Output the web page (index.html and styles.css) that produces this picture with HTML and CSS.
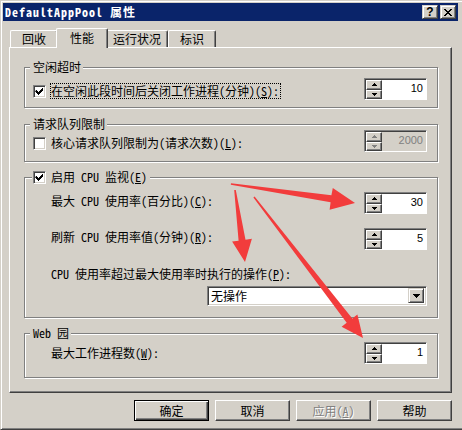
FILE: index.html
```html
<!DOCTYPE html>
<html lang="zh-CN">
<head>
<meta charset="utf-8">
<title>DefaultAppPool 属性</title>
<link rel="stylesheet" href="styles.css">
</head>
<body>
<div class="window">
  <div class="titlebar">
    <span class="title">DefaultAppPool 属性</span>
    <div class="caption">
      <span class="cbtn help">?</span>
      <span class="cbtn close"><svg width="8" height="7" viewBox="0 0 8 7"><path d="M0 0h2v1h-2z M6 0h2v1h-2z M1 1h2v1h-2z M5 1h2v1h-2z M2 2h4v1h-4z M3 3h2v1h-2z M2 4h4v1h-4z M1 5h2v1h-2z M5 5h2v1h-2z M0 6h2v1h-2z M6 6h2v1h-2z"/></svg></span>
    </div>
  </div>

  <div class="tabs">
    <div class="tab">回收</div>
    <div class="tab active">性能</div>
    <div class="tab">运行状况</div>
    <div class="tab">标识</div>
  </div>

  <div class="panel">
    <div class="group g-idle">
      <div class="legend">空闲超时</div>
      <div class="check-row">
        <div class="check-wrap">
          <span class="chk"><svg width="9" height="9" viewBox="0 0 9 9"><path d="M1 3h1v1h1v1h1v-1h1v-1h1v-1h1v-1h1v3h-1v1h-1v1h-1v1h-1v1h-1v-1h-1v-1h-1v-1h-1z"/></svg></span>
          <span class="lbl focus">在空闲此段时间后关闭工作进程(分钟)(<u>S</u>):</span>
        </div>
        <div class="spin">
          <div class="spin-btns">
            <span class="sb"><svg width="5" height="3" viewBox="0 0 5 3"><path d="M2 0h1v1h1v1h1v1h-5v-1h1v-1h1z"/></svg></span>
            <span class="sb"><svg width="5" height="3" viewBox="0 0 5 3"><path d="M0 0h5v1h-1v1h-1v1h-1v-1h-1v-1h-1z"/></svg></span>
          </div>
          <div class="spin-val">10</div>
        </div>
      </div>
    </div>

    <div class="group g-queue">
      <div class="legend">请求队列限制</div>
      <div class="check-row">
        <div class="check-wrap">
          <span class="chk"></span>
          <span class="lbl">核心请求队列限制为(请求次数)(<u>L</u>):</span>
        </div>
        <div class="spin disabled">
          <div class="spin-btns">
            <span class="sb"><svg width="5" height="3" viewBox="0 0 5 3"><path d="M2 0h1v1h1v1h1v1h-5v-1h1v-1h1z"/></svg></span>
            <span class="sb"><svg width="5" height="3" viewBox="0 0 5 3"><path d="M0 0h5v1h-1v1h-1v1h-1v-1h-1v-1h-1z"/></svg></span>
          </div>
          <div class="spin-val">2000</div>
        </div>
      </div>
    </div>

    <div class="group g-cpu">
      <div class="legend check-legend">
        <span class="chk"><svg width="9" height="9" viewBox="0 0 9 9"><path d="M1 3h1v1h1v1h1v-1h1v-1h1v-1h1v-1h1v3h-1v1h-1v1h-1v1h-1v1h-1v-1h-1v-1h-1v-1h-1z"/></svg></span>
        <span class="lbl">启用 CPU 监视(<u>E</u>)</span>
      </div>
      <div class="field-row first">
        <span class="txt">最大 CPU 使用率(百分比)(<u>C</u>):</span>
        <div class="spin">
          <div class="spin-btns">
            <span class="sb"><svg width="5" height="3" viewBox="0 0 5 3"><path d="M2 0h1v1h1v1h1v1h-5v-1h1v-1h1z"/></svg></span>
            <span class="sb"><svg width="5" height="3" viewBox="0 0 5 3"><path d="M0 0h5v1h-1v1h-1v1h-1v-1h-1v-1h-1z"/></svg></span>
          </div>
          <div class="spin-val">30</div>
        </div>
      </div>
      <div class="field-row">
        <span class="txt">刷新 CPU 使用率值(分钟)(<u>R</u>):</span>
        <div class="spin">
          <div class="spin-btns">
            <span class="sb"><svg width="5" height="3" viewBox="0 0 5 3"><path d="M2 0h1v1h1v1h1v1h-5v-1h1v-1h1z"/></svg></span>
            <span class="sb"><svg width="5" height="3" viewBox="0 0 5 3"><path d="M0 0h5v1h-1v1h-1v1h-1v-1h-1v-1h-1z"/></svg></span>
          </div>
          <div class="spin-val">5</div>
        </div>
      </div>
      <div class="sub-label">CPU 使用率超过最大使用率时执行的操作(<u>P</u>):</div>
      <div class="select-row">
        <div class="select">
          <span class="sel-text">无操作</span>
          <span class="sel-btn"><svg width="7" height="4" viewBox="0 0 7 4"><path d="M0 0h7v1h-1v1h-1v1h-1v1h-1v-1h-1v-1h-1v-1h-1z"/></svg></span>
        </div>
      </div>
    </div>

    <div class="group g-web">
      <div class="legend">Web 园</div>
      <div class="field-row">
        <span class="txt even">最大工作进程数(<u>W</u>):</span>
        <div class="spin">
          <div class="spin-btns">
            <span class="sb"><svg width="5" height="3" viewBox="0 0 5 3"><path d="M2 0h1v1h1v1h1v1h-5v-1h1v-1h1z"/></svg></span>
            <span class="sb"><svg width="5" height="3" viewBox="0 0 5 3"><path d="M0 0h5v1h-1v1h-1v1h-1v-1h-1v-1h-1z"/></svg></span>
          </div>
          <div class="spin-val">1</div>
        </div>
      </div>
    </div>
  </div>

  <div class="buttons">
    <div class="btn default">确定</div>
    <div class="btn">取消</div>
    <div class="btn disabled">应用(<u>A</u>)</div>
    <div class="btn">帮助</div>
  </div>
</div>

<svg class="annot" width="462" height="430" viewBox="0 0 462 430">
  <polygon points="231,183.2 331.4,195.3 332.8,187.9 355,203 329.6,209.7 330.6,202.3 230.8,184.8"/>
  <polygon points="234.2,190.1 238.6,240.7 232.1,241.6 245,262 251.9,238.8 245.5,239.7 235.8,189.9"/>
  <polygon points="253.4,197.5 346.7,322.7 341.6,326.7 363,338 357.4,314.5 352.3,318.5 254.6,196.5"/>
</svg>
</body>
</html>
```

FILE: styles.css
```css
* { box-sizing: border-box; }

html, body {
  margin: 0;
  padding: 0;
  background: #d4d0c8;
}

body {
  font-family: "Noto Sans Mono CJK SC", "Noto Sans CJK SC", sans-serif;
  font-size: 12px;
  line-height: 14px;
  color: #000;
}

u { text-underline-offset: 1px; }

.window {
  width: 462px;
  height: 430px;
  background: #d4d0c8;
  border-top: 1px solid #d4d0c8;
  border-left: 1px solid #d4d0c8;
  border-bottom: 1px solid #404040;
  box-shadow: inset 1px 1px 0 #fff, inset 0 -1px 0 #808080;
  padding: 2px 4px 0 2px;
  display: flex;
  flex-direction: column;
}

/* title bar */
.titlebar {
  height: 18px;
  background: #0a246a;
  display: flex;
  align-items: flex-start;
  padding: 0 2px 0 2px;
}

.title {
  flex: 1;
  color: #fff;
  font-weight: bold;
  letter-spacing: 1px;
  line-height: 18px;
  white-space: nowrap;
}

.caption {
  display: flex;
  gap: 2px;
  margin-top: 2px;
}

.cbtn {
  width: 16px;
  height: 14px;
  background: #d4d0c8;
  border: 1px solid;
  border-color: #d4d0c8 #404040 #404040 #d4d0c8;
  box-shadow: inset 1px 1px 0 #fff, inset -1px -1px 0 #808080;
  display: flex;
  align-items: center;
  justify-content: center;
}

.cbtn.help {
  font-family: "Liberation Sans", sans-serif;
  font-weight: bold;
  font-size: 12px;
  line-height: 12px;
}

.cbtn svg { display: block; }

/* tabs */
.tabs {
  display: flex;
  align-items: flex-end;
  height: 19px;
  margin: 7px 0 0 7px;
}

.tab {
  height: 17px;
  min-width: 48px;
  padding: 0 6px;
  text-align: center;
  line-height: 16px;
  background: #d4d0c8;
  border-top: 1px solid #fff;
  border-left: 1px solid #fff;
  border-right: 1px solid #404040;
  box-shadow: inset -1px 0 0 #808080;
  border-radius: 2px 2px 0 0;
  white-space: nowrap;
}

.tab.active {
  height: 20px;
  min-width: 52px;
  padding: 0 8px;
  line-height: 18px;
  margin: 0 -2px -1px -2px;
  position: relative;
  z-index: 1;
}

/* panel */
.panel {
  height: 346px;
  margin: 0 6px;
  border: 1px solid;
  border-color: #fff #404040 #404040 #fff;
  box-shadow: inset -1px -1px 0 #808080;
  padding: 19px 13px 0 14px;
  display: flex;
  flex-direction: column;
}

.group {
  display: flex;
  flex-direction: column;
  border: 1px solid #808080;
  box-shadow: 1px 1px 0 #fff, inset 1px 1px 0 #fff;
  padding: 0 10px 0 0;
}

.g-idle { padding-bottom: 7px; }
.g-queue { margin-top: 16px; padding-bottom: 9px; }
.g-cpu { margin-top: 15px; padding-bottom: 11px; }
.g-web { margin-top: 15px; padding-bottom: 13px; }

.legend {
  align-self: flex-start;
  height: 14px;
  line-height: 14px;
  margin: -8px 0 -6px 5px;
  padding: 0 2px 0 3px;
  background: #d4d0c8;
  white-space: nowrap;
}

.check-legend {
  display: flex;
  align-items: center;
  margin-left: 7px;
  padding: 0 1px 0 1px;
}

.check-row {
  display: flex;
  align-items: flex-start;
  margin-left: 8px;
}

.g-idle .check-row { margin-top: 10px; }
.g-queue .check-row { margin-top: 5px; }

.check-wrap {
  display: flex;
  align-items: center;
  height: 16px;
  margin-top: 5px;
}

.chk {
  width: 13px;
  height: 13px;
  flex: none;
  background: #fff;
  border: 1px solid;
  border-color: #808080 #fff #fff #808080;
  box-shadow: inset 1px 1px 0 #404040, inset -1px -1px 0 #d4d0c8;
  padding: 1px;
  margin-right: 4px;
}

.chk svg { display: block; }

.lbl {
  border: 1px solid transparent;
  padding: 0 1px 0 0;
  line-height: 14px;
  white-space: nowrap;
}

.lbl.focus { border: 1px dotted #000; }

.field-row {
  display: flex;
  align-items: center;
  margin: 14px 0 0 26px;
}

.g-web .field-row { margin-top: 8px; }

.txt {
  white-space: nowrap;
  margin-bottom: 4px;
}

.txt.even { margin-bottom: 1px; }

.sub-label {
  margin: 16px 0 0 26px;
  line-height: 16px;
  white-space: nowrap;
}

.select-row {
  display: flex;
  justify-content: flex-end;
  margin-top: 4px;
}

.select {
  width: 220px;
  height: 20px;
  display: flex;
  align-items: stretch;
  background: #fff;
  border: 1px solid;
  border-color: #808080 #fff #fff #808080;
  box-shadow: inset 1px 1px 0 #404040, inset -1px -1px 0 #d4d0c8;
  padding: 1px 2px 2px 1px;
}

.sel-text {
  flex: 1;
  padding-left: 2px;
  line-height: 16px;
}

.sel-btn {
  width: 16px;
  background: #d4d0c8;
  border: 1px solid;
  border-color: #d4d0c8 #404040 #404040 #d4d0c8;
  box-shadow: inset 1px 1px 0 #fff, inset -1px -1px 0 #808080;
  display: flex;
  align-items: center;
  justify-content: center;
}

.sel-btn svg { display: block; }

/* spinner */
.spin {
  width: 63px;
  height: 22px;
  flex: none;
  margin-left: auto;
  display: flex;
  background: #fff;
  border: 1px solid;
  border-color: #808080 #fff #fff #808080;
  box-shadow: inset 1px 1px 0 #404040;
  padding: 1px 0 0 1px;
}

.spin-btns {
  width: 16px;
  display: flex;
  flex-direction: column;
}

.sb {
  flex: 1;
  background: #d4d0c8;
  border: 1px solid;
  border-color: #fff #404040 #404040 #fff;
  box-shadow: inset -1px -1px 0 #808080;
  display: flex;
  align-items: center;
  justify-content: center;
}

.sb svg { display: block; }

.spin-val {
  flex: 1;
  text-align: right;
  padding-right: 3px;
  font-family: "Liberation Sans", sans-serif;
  font-size: 11px;
  line-height: 16px;
}

.spin.disabled {
  background: #d4d0c8;
}

.spin.disabled .spin-val { color: #808080; }
.spin.disabled .sb svg { fill: #808080; }

/* buttons */
.buttons {
  display: flex;
  justify-content: flex-end;
  gap: 6px;
  margin: 7px 6px 0 0;
}

.btn {
  width: 75px;
  height: 21px;
  text-align: center;
  line-height: 19px;
  background: #d4d0c8;
  border: 1px solid;
  border-color: #fff #404040 #404040 #fff;
  box-shadow: inset -1px -1px 0 #808080;
}

.btn.default {
  border: 1px solid #000;
  box-shadow: inset 1px 1px 0 #fff, inset -1px -1px 0 #404040, inset -2px -2px 0 #808080;
}

.btn.disabled {
  color: #808080;
  text-shadow: 1px 1px 0 #fff;
}

/* red annotation arrows */
.annot {
  position: absolute;
  left: 0;
  top: 0;
  pointer-events: none;
}

.annot polygon { fill: #f23c3c; }
```
